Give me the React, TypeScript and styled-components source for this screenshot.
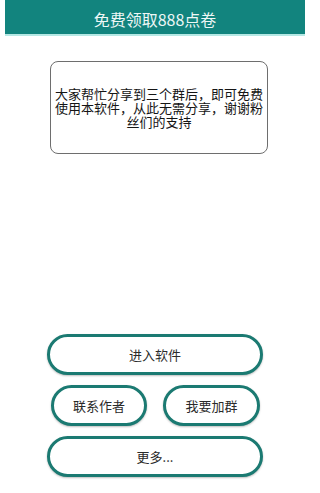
import React from 'react';
import styled, { createGlobalStyle } from 'styled-components';

const GlobalStyle = createGlobalStyle`
  html, body {
    margin: 0;
    padding: 0;
    background: #ffffff;
  }
  body {
    font-family: 'Noto Sans CJK SC', 'Noto Sans', sans-serif;
  }
`;

const Page = styled.div`
  width: 309px;
  height: 493px;
  display: flex;
  flex-direction: column;
  background: #ffffff;
`;

const Header = styled.div`
  margin: 0 4px 0 5px;
  height: 36px;
  background: #12847e;
  border-bottom: 2px solid #b5e8e4;
  display: flex;
  align-items: center;
  justify-content: center;
  color: #eef7f6;
  font-size: 16px;
  padding-top: 4px;
  box-sizing: border-box;
`;

const Notice = styled.div`
  margin: 25px 41px 0 50px;
  height: 93px;
  border: 1px solid #6e6e6e;
  border-radius: 8px;
  box-sizing: border-box;
  display: flex;
  align-items: center;
  justify-content: center;
  text-align: center;
  padding: 0 3px;
  font-size: 13px;
  line-height: 14px;
  color: #151515;
`;

const Actions = styled.div`
  margin: 180px 46px 0 47px;
  display: flex;
  flex-direction: column;
  gap: 10px;
`;

const Row = styled.div`
  display: flex;
  justify-content: space-between;
  padding: 0 3px 0 4px;
`;

const PillButton = styled.button<{ $w?: number }>`
  width: ${(p) => (p.$w ? `${p.$w}px` : '100%')};
  height: 41px;
  border: 3px solid #1b7a72;
  border-radius: 21px;
  background: #ffffff;
  box-shadow: 0 1px 2px rgba(0, 0, 0, 0.25);
  font-family: 'Noto Sans CJK SC', 'Noto Sans', sans-serif;
  font-size: 13px;
  color: #2a2a2a;
  padding: 0;
  cursor: pointer;
`;

const App = () => {
  return (
    <Page>
      <GlobalStyle />
      <Header>免费领取888点卷</Header>
      <Notice>
        大家帮忙分享到三个群后，即可免费使用本软件，从此无需分享，谢谢粉丝们的支持
      </Notice>
      <Actions>
        <PillButton>进入软件</PillButton>
        <Row>
          <PillButton $w={96}>联系作者</PillButton>
          <PillButton $w={97}>我要加群</PillButton>
        </Row>
        <PillButton>更多...</PillButton>
      </Actions>
    </Page>
  );
};

export default App;
